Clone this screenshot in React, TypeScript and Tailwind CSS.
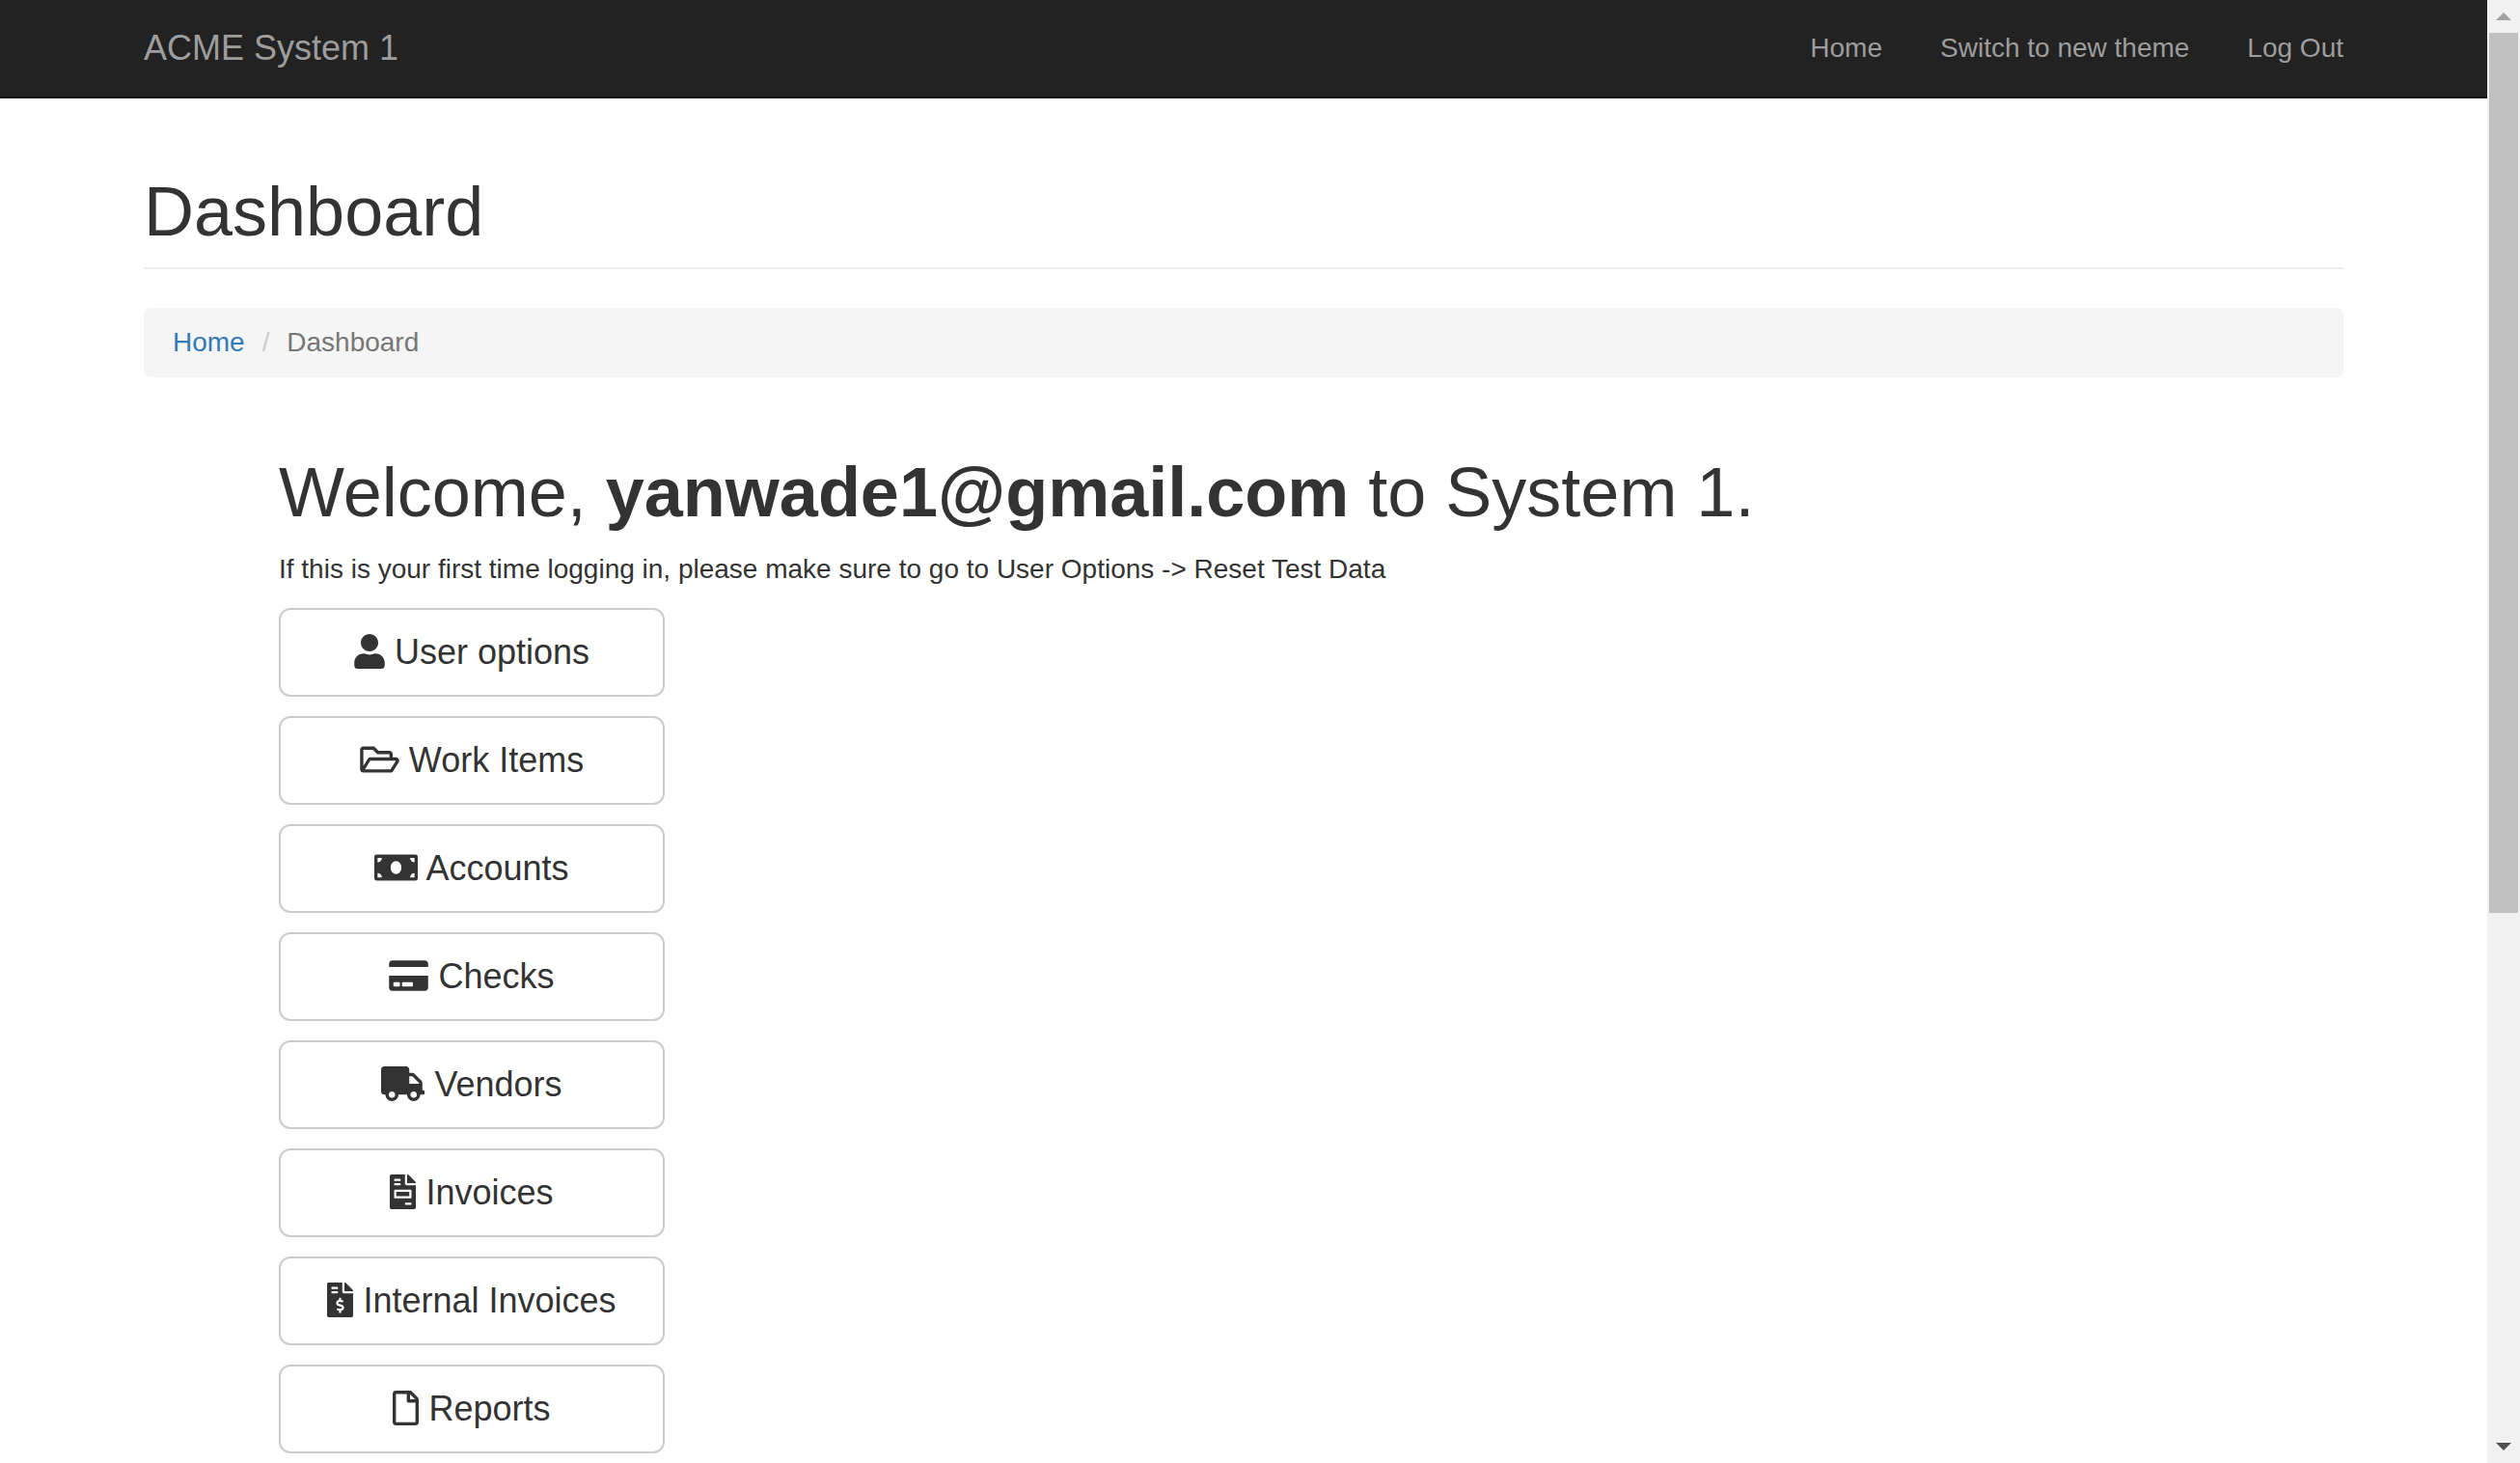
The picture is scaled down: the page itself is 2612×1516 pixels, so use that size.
import React from "react";
import {
  FaCreditCard,
  FaFileInvoice,
  FaFileInvoiceDollar,
  FaMoneyBill,
  FaRegFile,
  FaRegFolderOpen,
  FaTruck,
  FaUser,
} from "react-icons/fa";
import type { IconType } from "react-icons";

const navLinks = ["Home", "Switch to new theme", "Log Out"];

type MenuItem = { label: string; icon: IconType; iconWidth: string };

// Every icon is 36px tall; its width follows the glyph's own proportions.
const menu: MenuItem[] = [
  { label: "User options", icon: FaUser, iconWidth: "w-8" },
  { label: "Work Items", icon: FaRegFolderOpen, iconWidth: "w-[41px]" },
  { label: "Accounts", icon: FaMoneyBill, iconWidth: "w-[45px]" },
  { label: "Checks", icon: FaCreditCard, iconWidth: "w-[41px]" },
  { label: "Vendors", icon: FaTruck, iconWidth: "w-[45px]" },
  { label: "Invoices", icon: FaFileInvoice, iconWidth: "w-[27px]" },
  { label: "Internal Invoices", icon: FaFileInvoiceDollar, iconWidth: "w-[27px]" },
  { label: "Reports", icon: FaRegFile, iconWidth: "w-[27px]" },
];

function Navbar() {
  return (
    <header className="border-b-2 border-[#080808] bg-[#222222] text-[#9d9d9d]">
      <nav className="mx-auto flex max-w-[2340px] items-center justify-between px-[30px] py-[30px] leading-10">
        <a href="#" className="text-4xl leading-10">
          ACME System 1
        </a>
        <ul className="flex gap-[60px]">
          {navLinks.map((label) => (
            <li key={label}>
              <a href="#">{label}</a>
            </li>
          ))}
        </ul>
      </nav>
    </header>
  );
}

function Breadcrumb() {
  return (
    <nav aria-label="Breadcrumb" className="mt-10 rounded-lg bg-[#f5f5f5] px-[30px] py-4">
      <ol className="flex">
        <li>
          <a href="#" className="text-[#337ab7]">
            Home
          </a>
        </li>
        <li className="text-[#777777]">
          <span className="pr-[10px] pl-[18px] text-[#cccccc]">/&nbsp;</span>
          Dashboard
        </li>
      </ol>
    </nav>
  );
}

function MenuButton({ label, icon: Icon, iconWidth }: MenuItem) {
  return (
    <button
      type="button"
      className="w-[400px] rounded-xl border-2 border-[#cccccc] bg-white px-8 py-5 text-center text-4xl leading-[48px] whitespace-nowrap text-[#333333]"
    >
      <Icon aria-hidden="true" className={`inline-block h-9 align-[-0.125em] ${iconWidth}`} /> {label}
    </button>
  );
}

function Scrollbar() {
  return (
    <div aria-hidden="true" className="sticky top-0 flex h-screen w-[34px] shrink-0 flex-col bg-[#f1f1f1]">
      <div className="flex h-[34px] shrink-0 items-center justify-center">
        <svg viewBox="0 0 16 8" className="h-2 w-4 fill-[#a3a3a3]">
          <path d="M8 0L16 8H0z" />
        </svg>
      </div>
      <div className="min-h-0 flex-1 px-[2px]">
        <div className="h-[63%] bg-[#c1c1c1]" />
      </div>
      <div className="flex h-[34px] shrink-0 items-center justify-center">
        <svg viewBox="0 0 16 8" className="h-2 w-4 fill-[#505050]">
          <path d="M0 0H16L8 8z" />
        </svg>
      </div>
    </div>
  );
}

export default function App() {
  return (
    <div className="flex min-h-screen bg-white font-['Liberation_Sans',Arial,sans-serif] text-[28px] leading-10 text-[#333333]">
      <div className="min-w-0 flex-1">
        <Navbar />
        <main className="mx-auto max-w-[2340px] px-[30px] pt-[78px]">
          <h1 className="border-b-2 border-[#eeeeee] pb-[18px] text-7xl leading-[79px] font-normal">Dashboard</h1>
          <Breadcrumb />
          <section className="mt-20 px-[140px]">
            <h2 className="text-7xl leading-[79px] font-normal">
              Welcome, <strong className="font-bold">yanwade1@gmail.com</strong> to System 1.
            </h2>
            <p className="my-5">
              If this is your first time logging in, please make sure to go to User Options -&gt; Reset Test Data
            </p>
            <div className="flex flex-col items-start gap-5">
              {menu.map((item) => (
                <MenuButton key={item.label} {...item} />
              ))}
            </div>
          </section>
        </main>
      </div>
      <Scrollbar />
    </div>
  );
}
